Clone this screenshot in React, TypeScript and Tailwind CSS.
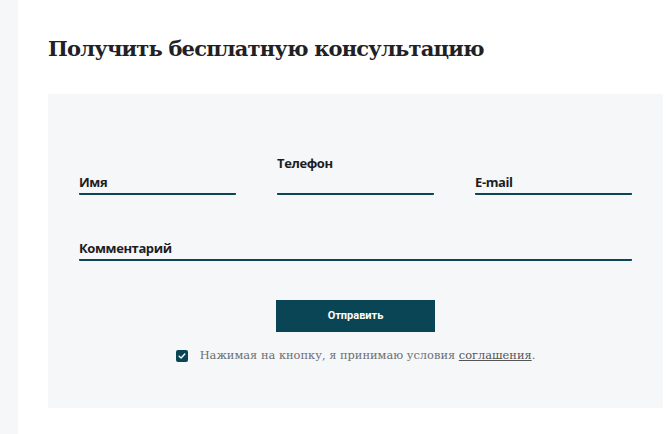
import React, { useState } from 'react';

const FIELDS = [
  { id: 'name', label: 'Имя', raised: false },
  { id: 'phone', label: 'Телефон', raised: true },
  { id: 'email', label: 'E-mail', raised: false },
];

function Field({ label, raised }: { label: string; raised?: boolean }) {
  return (
    <label className="relative block h-[41px] border-b-2 border-[#0b4656] rounded-[1px]">
      <span
        className={
          raised
            ? 'absolute left-0 top-[3px] text-[13px] tracking-[-0.4px] font-bold text-[#1d1d1f] font-["Open_Sans",sans-serif] leading-none'
            : 'absolute left-0 bottom-[4px] text-[13px] tracking-[-0.4px] font-bold text-[#1d1d1f] font-["Open_Sans",sans-serif] leading-none'
        }
      >
        {label}
      </span>
    </label>
  );
}

export default function App() {
  const [agree, setAgree] = useState(true);

  return (
    <div className="w-[670px] h-[434px] bg-white flex overflow-hidden">
      {/* side strip */}
      <div className="w-[18px] shrink-0 bg-[#f6f7f9]" />

      <div className="flex-1 pl-[30px] pr-[7px]">
        <h1 className='pt-[34px] h-[94px] text-[21px] leading-[30px] font-bold text-[#1f2124] font-["DejaVu_Serif",serif] tracking-[-0.8px]'>
          Получить бесплатную консультацию
        </h1>

        <form
          className="h-[314px] bg-[#f6f7f9] px-[31px] pt-[60px] flex flex-col"
          onSubmit={(e) => e.preventDefault()}
        >
          <div className="grid grid-cols-3 gap-x-[41px]">
            {FIELDS.map((f) => (
              <Field key={f.id} label={f.label} raised={f.raised} />
            ))}
          </div>

          <div className="mt-[25px]">
            <Field label="Комментарий" />
          </div>

          <div className="mt-[39px] flex justify-center">
            <button
              type="submit"
              className='w-[159px] h-[32px] bg-[#0a4555] text-white text-[11px] font-bold font-["Roboto",sans-serif]'
            >
              Отправить
            </button>
          </div>

          <div className="mt-[15px] flex items-center justify-center gap-[12px]">
            <button
              type="button"
              onClick={() => setAgree(!agree)}
              className="w-[12px] h-[12px] rounded-[2px] bg-[#0a4555] flex items-center justify-center"
            >
              {agree && (
                <svg width="8" height="8" viewBox="0 0 8 8" fill="none">
                  <path d="M1.2 4.2 L3.1 6 L6.8 2" stroke="white" strokeWidth="1.4" strokeLinecap="round" strokeLinejoin="round" />
                </svg>
              )}
            </button>
            <span className='text-[11.4px] text-[#6b6e72] font-["DejaVu_Serif",serif] font-light'>
              Нажимая на кнопку, я принимаю условия{' '}
              <a href="#" className="underline text-[#555]">соглашения</a>.
            </span>
          </div>
        </form>
      </div>
    </div>
  );
}
